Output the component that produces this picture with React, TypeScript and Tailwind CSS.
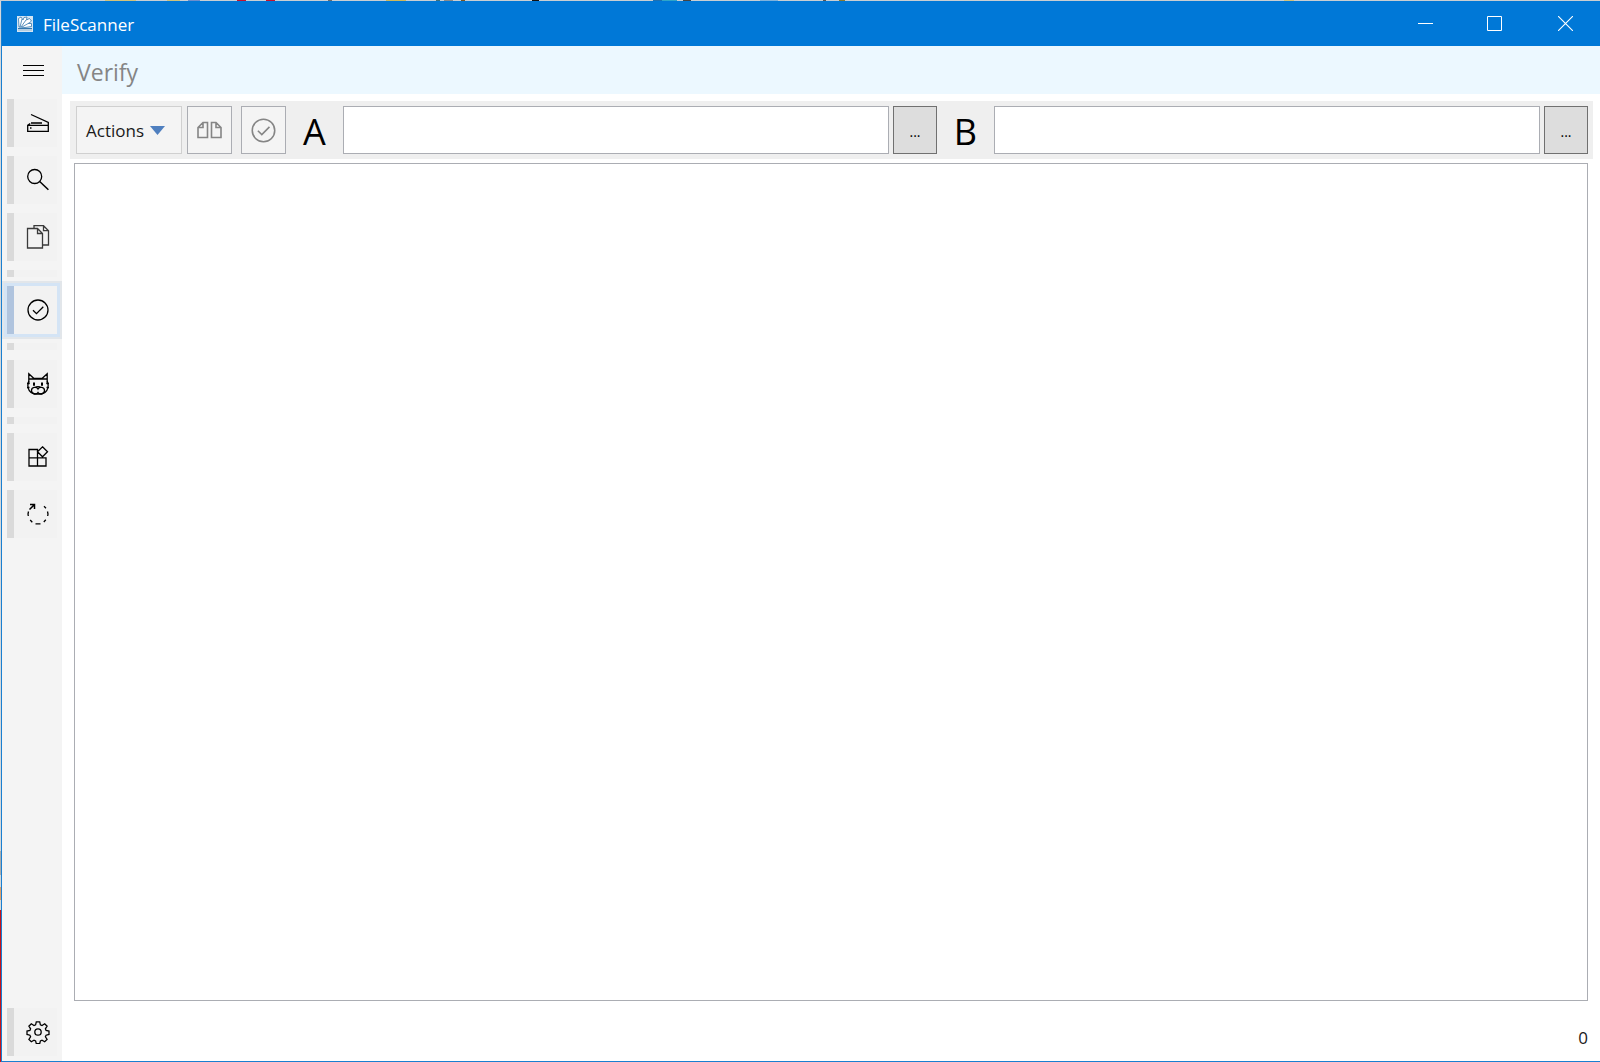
import type { ReactNode } from "react";

const topStrip =
  "linear-gradient(90deg,#c9ced2 0 105px,#d3c27a 105px 136px,#c9ced2 136px 167px,#cfc27a 167px 180px,#c9ced2 180px 188px,#6e8ecb 188px 200px,#c9ced2 200px 237px,#c8102e 237px 246px,#c9ced2 246px 266px,#c8102e 266px 275px,#c9ced2 275px 328px,#6b6b6b 328px 332px,#c9ced2 332px 386px,#cfb85a 386px 406px,#c9ced2 406px 436px,#3f6f7a 436px 440px,#c9ced2 440px 444px,#8a8a8a 444px 453px,#c9ced2 453px 461px,#7a5520 461px 465px,#c9ced2 465px 532px,#111111 532px 539px,#c9ced2 539px 653px,#1d6fb0 653px 662px,#2fa5c8 662px 677px,#c9ced2 677px 683px,#444444 683px 691px,#c9ced2 691px 760px,#7fb2dc 760px 778px,#c9ced2 778px 823px,#555555 823px 826px,#c9ced2 826px 839px,#8a7a30 839px 845px,#c9ced2 845px 1284px,#d3c27a 1284px 1294px,#c9ced2 1294px)";
const leftStrip =
  "linear-gradient(180deg,#d4d8db 0 850px,#a9adb0 850px 874px,#d4d8db 874px 886px,#e0a26e 886px 899px,#d9d9d9 899px 909px,#c4141c 909px)";

function Icon({ size = 24, children }: { size?: number; children: ReactNode }) {
  return (
    <svg width={size} height={size} viewBox={`0 0 ${size} ${size}`} fill="none" stroke="currentColor" strokeWidth="1.3" className="shrink-0" aria-hidden="true">
      {children}
    </svg>
  );
}

const CheckCircle = () => (
  <>
    <circle cx="12" cy="12" r="10" />
    <path d="M7 12.2l3.500 3.400 6.800-6.800" />
  </>
);

function NavItem({ label, selected = false, children }: { label: string; selected?: boolean; children: ReactNode }) {
  return (
    <button
      type="button"
      aria-label={label}
      aria-current={selected ? "page" : undefined}
      className={`flex h-12 w-full items-center bg-[#f2f2f2] text-black ${selected ? "shadow-[0_0_0_3px_#d4e4f5,0_0_0_5px_#e2e6ea]" : ""}`}
    >
      <span className={`h-full w-[7px] ${selected ? "bg-[#b0c4de]" : "bg-[#dadada]"}`} />
      <span className="flex flex-1 justify-center pl-[5px]">
        <Icon>{children}</Icon>
      </span>
    </button>
  );
}

const Divider = () => (
  <div className="h-[7px] w-full bg-[#f2f2f2]">
    <div className="h-full w-[7px] bg-[#dadada]" />
  </div>
);

function PathField({ name }: { name: string }) {
  const id = `path-${name}`;
  return (
    <div className="flex min-w-0 flex-1 items-center">
      <label htmlFor={id} className="w-[57px] pt-1 text-center text-[36px] leading-12 text-black">
        {name}
      </label>
      <input id={id} type="text" className="h-12 min-w-0 flex-1 border border-[#abadb3] bg-white px-2 text-lg outline-none" />
      <button type="button" aria-label={`Browse ${name}`} className="ml-1 h-12 w-11 shrink-0 border border-[#707070] bg-[#dddddd] pt-1 text-sm text-black">
        ...
      </button>
    </div>
  );
}

export default function App() {
  return (
    <div className="flex h-screen flex-col font-['Open_Sans','Noto_Sans',sans-serif]">
      <div className="h-px shrink-0" style={{ background: topStrip }} />
      <div className="flex min-h-0 flex-1">
        <div className="w-px shrink-0" style={{ background: leftStrip }} />
        <div className="flex min-w-0 flex-1 flex-col border-b border-l border-[#1a7fd0] bg-white">
          <header className="flex h-[45px] shrink-0 items-center bg-[#0078d7] pl-[15px] text-white">
            <svg width="16" height="16" viewBox="0 0 16 16" aria-hidden="true">
              <rect width="16" height="16" fill="#d3e5f3" />
              <path d="M2 11L1.500 2.500 4 1l2 3 1-2.500L10 1l-.5 3 3-1.500 2 2.500-3 2.500h3v3L8 11.500z" fill="#ffffff" stroke="#3477ad" strokeWidth=".8" />
              <path d="M3 11L5 3M4 11L9 4M5 11l7-4" stroke="#3477ad" strokeWidth=".8" />
              <path d="M1 12h14v3H1z" fill="#b4cde0" />
              <path d="M1 12.500h14" stroke="#3477ad" />
            </svg>
            <h1 className="ml-2.5 flex-1 pt-0.5 text-[17px]">FileScanner</h1>
            <div className="flex h-full">
              <button type="button" aria-label="Minimize" className="flex w-[69px] items-center justify-center">
                <Icon size={15}><path d="M0 7.500h15" strokeWidth="1" /></Icon>
              </button>
              <button type="button" aria-label="Maximize" className="flex w-[69px] items-center justify-center">
                <Icon size={15}><path d="M.5.5h14v14H.5z" strokeWidth="1" /></Icon>
              </button>
              <button type="button" aria-label="Close" className="ml-0.5 flex w-[69px] items-center justify-center">
                <Icon size={15}><path d="M0 0l15 15M15 0L0 15" strokeWidth="1.1" /></Icon>
              </button>
            </div>
          </header>
          <div className="flex min-h-0 flex-1">
            <nav aria-label="Sections" className="flex w-[60px] shrink-0 flex-col bg-[#f4f4f4] px-[5px] pb-[5px]">
              <button type="button" aria-label="Menu" className="flex h-[53px] shrink-0 items-center pb-1 pl-4 text-black">
                <svg width="21" height="11" viewBox="0 0 21 11" stroke="currentColor" aria-hidden="true">
                  <path d="M0 .5h21M0 5.500h21M0 10.500h21" />
                </svg>
              </button>
              <div className="flex flex-col gap-[9px]">
                <NavItem label="Scan">
                  <path d="M5 3.500L22.300 11.500v8.800H1.700v-6h20.600M1.700 14.300l2.500-1.800" />
                  <path d="M5 12h11" strokeWidth="2" stroke="#3a3a3a" />
                  <path d="M4 17h1.500" />
                </NavItem>
                <NavItem label="Search">
                  <circle cx="8.700" cy="8.500" r="7" />
                  <path d="M13.700 13.500l8.700 8.200" strokeWidth="1.500" />
                </NavItem>
                <NavItem label="Duplicates">
                  <g stroke="#3a3a3a">
                    <path d="M1.500 3.500h10l5 5v14.500h-15zM11.500 3.500v5h5M8 3.500V.7h9.500l5 5V20h-6M17.500.7v5h5" />
                  </g>
                </NavItem>
                <Divider />
                <NavItem label="Verify" selected>
                  <CheckCircle />
                </NavItem>
                <div className="flex flex-col gap-2.5">
                  <Divider />
                  <NavItem label="Cleanup">
                    <path d="M2.800 12V1.800l5.200 4.700h8l5.200-4.700V12M2.800 7h18.400" />
                    <path d="M2.800 9C1.500 12 1.800 16 3.300 18.700c1.200 2 2.700 3 5 3.300h7.400c2.300-.3 3.800-1.300 5-3.300 1.500-2.700 1.800-6.700.5-9.700" />
                    <path d="M12 17c-1.500-2.800-6.500-2-6.500 1.500s5 4.500 6.500 2c1.500 2.500 6.500 1.500 6.500-2s-5-4.300-6.500-1.500zM9.500 15.500c.5-1.200 4.500-1.200 5 0M1 11.500h2.500M1 15.500h2.500M23 11.500h-2.500M23 15.500h-2.500" />
                    <path d="M8 10.500v3.300M16 10.500v3.300" strokeWidth="2" />
                  </NavItem>
                </div>
                <Divider />
                <NavItem label="Modules">
                  <path d="M3 4.500h8.500v16.500H3zM3 12.800h17V21H3M11.500 12.500V21M16.500 1.800l5 5-5 5-5-5z" />
                </NavItem>
                <NavItem label="Refresh">
                  <path d="M18 4.200l2 2M21.500 9.500l.5 2.500-.3 2M19.800 17.800L17.800 20M14.500 21.800h-5M6.300 20.200L4.200 18M2.300 14L2 12l.5-2.500" />
                  <path d="M3.500 7.500L8 3M4 2.500h4.500v4.500" strokeWidth="1.500" />
                </NavItem>
              </div>
              <div className="mt-auto">
                <NavItem label="Settings">
                  <circle cx="12" cy="12" r="3.200" />
                  <path d="M10.300 1.800h3.400l.7 3 1.600.7 2.700-1.700 2.400 2.400-1.700 2.700.7 1.600 2.900.6v3.400l-2.900.7-.7 1.600 1.700 2.600-2.400 2.400-2.700-1.600-1.600.7-.7 2.800h-3.400l-.7-2.800-1.600-.7-2.700 1.600-2.400-2.400 1.700-2.600-.7-1.600-2.900-.7v-3.400l2.900-.6.7-1.600L2.900 6.200l2.400-2.400L8 5.500l1.600-.7z" />
                </NavItem>
              </div>
            </nav>
            <main className="flex min-w-0 flex-1 flex-col">
              <h2 className="h-12 shrink-0 bg-[#ecf8ff] pl-[15px] text-[23px] leading-[52px] text-[#858585]">Verify</h2>
              <div className="mt-[7px] mr-[7px] ml-2 flex h-[58px] shrink-0 items-center bg-[#efefef] pr-[5px] pl-1.5">
                <button type="button" className="flex h-12 w-[106px] items-center border border-[#d0d0d0] bg-[#f4f4f4] pl-[9px] text-[17px] text-[#1a1a1a]">
                  <span className="pt-0.5">Actions</span>
                  <svg width="15" height="9" viewBox="0 0 15 9" className="ml-1.5" aria-hidden="true">
                    <path d="M0 0h15L7.500 9z" fill="#4f7fbf" />
                  </svg>
                </button>
                <button type="button" aria-label="Compare files" className="ml-[5px] flex h-12 w-[45px] items-center justify-center border border-[#abadb3] bg-[#f4f4f4] text-[#858585]">
                  <svg width="25" height="18" viewBox="0 0 25 18" fill="none" stroke="currentColor" strokeWidth="1.600" aria-hidden="true">
                    <path d="M6 1.500h4.500v15h-9.500v-10zM6 1.500v5H1M14.500 1.500h4.500l5 5v10h-9.500zM19 1.500v5h5" />
                  </svg>
                </button>
                <button type="button" aria-label="Verify" className="ml-[9px] flex h-12 w-[45px] items-center justify-center border border-[#abadb3] bg-[#f4f4f4] text-[#858585]">
                  <svg width="27" height="27" viewBox="0 0 24 24" fill="none" stroke="currentColor" strokeWidth="1.400" aria-hidden="true">
                    <CheckCircle />
                  </svg>
                </button>
                <PathField name="A" />
                <PathField name="B" />
              </div>
              <section aria-label="Results" className="mx-3 mt-1 flex-1 border border-[#abadb3] bg-white" />
              <footer className="flex h-[60px] shrink-0 items-center justify-end pt-3.5 pr-3 text-[17px] text-[#1a1a1a]">0</footer>
            </main>
          </div>
        </div>
      </div>
    </div>
  );
}
